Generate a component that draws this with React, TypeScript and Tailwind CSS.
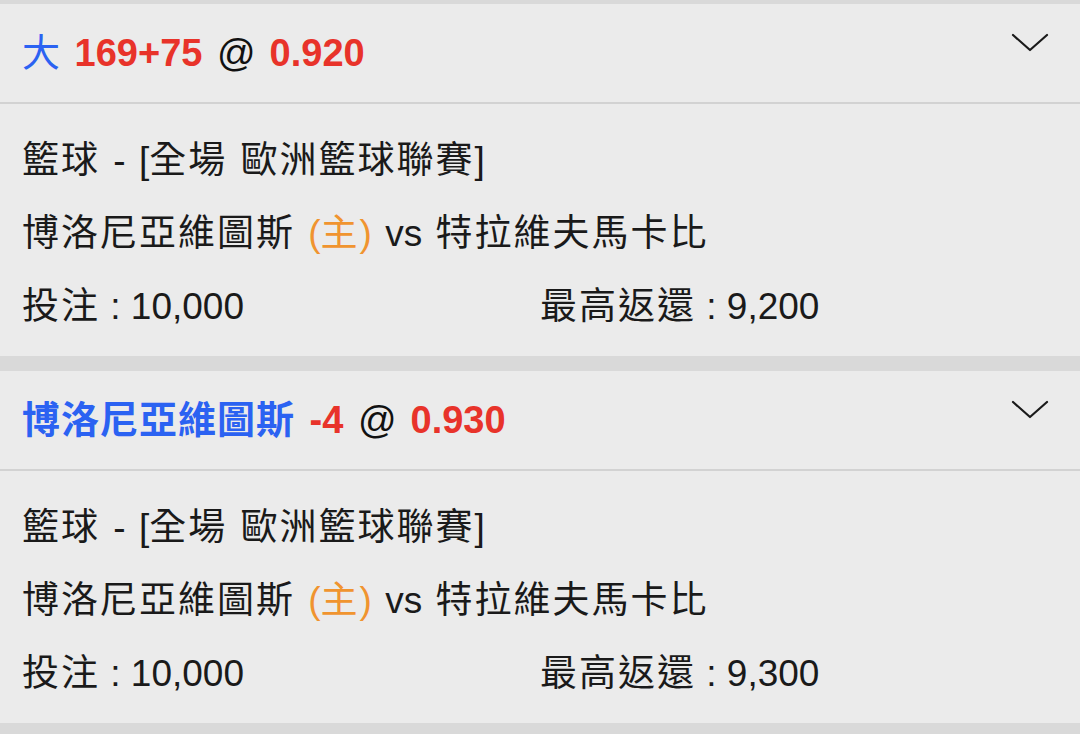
const font = { fontFamily: '"Liberation Sans", "Noto Sans CJK TC", sans-serif' }

type Bet = {
  pick: string
  pickBold: boolean
  line: string
  odds: string
  stake: string
  ret: string
}

const bets: Bet[] = [
  { pick: '大', pickBold: false, line: '169+75', odds: '0.920', stake: '10,000', ret: '9,200' },
  { pick: '博洛尼亞維圖斯', pickBold: true, line: '-4', odds: '0.930', stake: '10,000', ret: '9,300' },
]

// CJK glyphs in the reference sit a little wider apart than Noto's
function T({ text }: { text: string }) {
  const parts = text.split(/([\u3400-\u9fff]+)/)
  return (
    <>
      {parts.map((p, i) =>
        /[\u3400-\u9fff]/.test(p) ? (
          <span key={i} className="tracking-[2px]">
            {p}
          </span>
        ) : (
          <span key={i}>{p}</span>
        ),
      )}
    </>
  )
}

function Chevron() {
  return (
    <svg width="38" height="20" viewBox="0 0 38 20" fill="none" className="shrink-0 self-start mt-[29px]">
      <path d="M2 2 L19 17 L36 2" stroke="#1a1a1a" strokeWidth="2.2" strokeLinecap="round" strokeLinejoin="round" />
    </svg>
  )
}

function BetCard({ bet }: { bet: Bet }) {
  return (
    <div className="bg-[#ebebeb]">
      <div className="h-[100px] flex items-center justify-between pl-[22px] pr-[31px] border-b-2 border-[#d2d2d2]">
        <div className="text-[38px] whitespace-nowrap [word-spacing:4px]">
          <span className={bet.pickBold ? 'text-[#2b62f2] font-bold tracking-[1px]' : 'text-[#2b62f2]'}>
            {bet.pick}
          </span>{' '}
          <span className="text-[#e8332a] font-bold">{bet.line}</span>{' '}
          <span className="text-[#111] inline-block w-[38px] text-center">@</span>{' '}
          <span className="text-[#e8332a] font-bold">{bet.odds}</span>
        </div>
        <Chevron />
      </div>
      <div className="px-[22px] pt-[20px] pb-[13px] text-[37px] leading-[73px] text-[#1a1a1a] [word-spacing:3px]">
        <div>
          <T text="籃球 - [全場 歐洲籃球聯賽]" />
        </div>
        <div>
          <T text="博洛尼亞維圖斯" /> <span className="text-[#f0942f]">(<T text="主" />)</span> vs{' '}
          <T text="特拉維夫馬卡比" />
        </div>
        <div className="grid grid-cols-2 [word-spacing:0px]">
          <div>
            <T text={'投注 : ' + bet.stake} />
          </div>
          <div>
            <T text={'最高返還 : ' + bet.ret} />
          </div>
        </div>
      </div>
    </div>
  )
}

export default function App() {
  return (
    <div className="w-[1080px] h-[734px] overflow-hidden bg-[#d9d9d9] pt-[4px] flex flex-col gap-[15px]" style={font}>
      {bets.map((b, i) => (
        <BetCard key={i} bet={b} />
      ))}
    </div>
  )
}
